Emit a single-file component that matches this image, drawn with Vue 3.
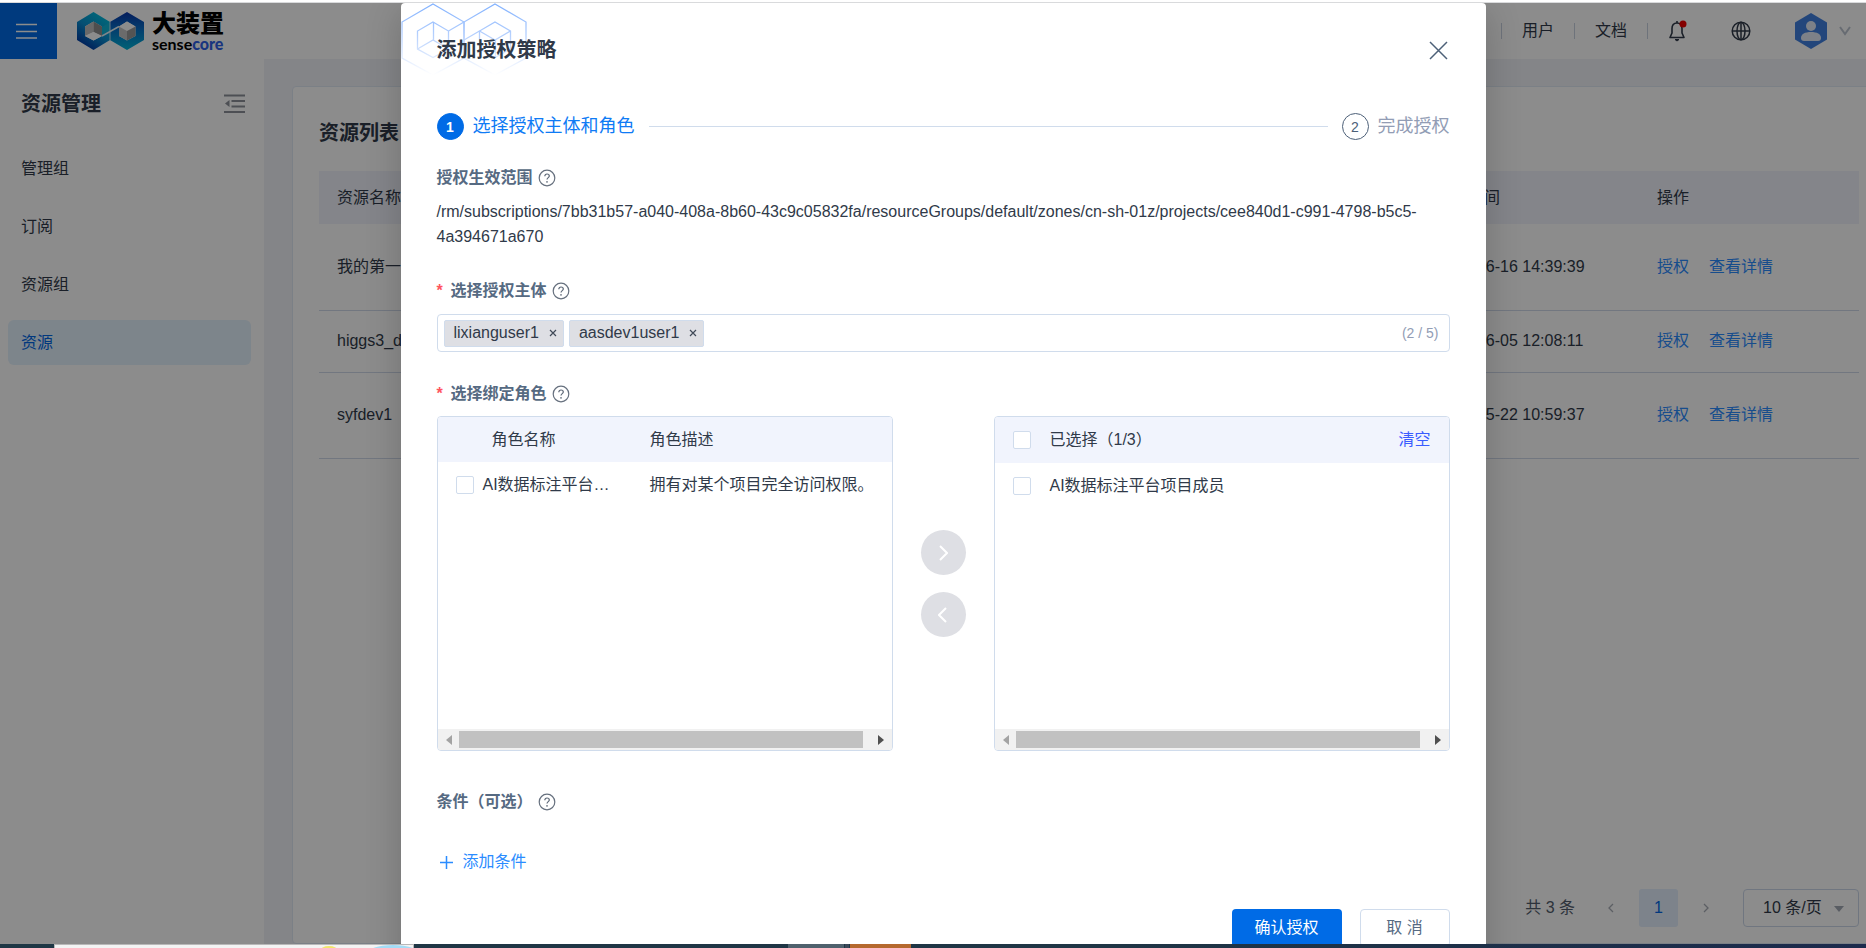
<script setup>
import { ref } from 'vue'

const menu = ['管理组', '订阅', '资源组', '资源']
const active = ref('资源')

const rows = [
  { name: '我的第一', time: '2022-06-16 14:39:39', size: 'tall' },
  { name: 'higgs3_d', time: '2022-06-05 12:08:11', size: 'short' },
  { name: 'syfdev1', time: '2022-05-22 10:59:37', size: 'tall' }
]

const members = ref(['lixianguser1', 'aasdev1user1'])
const removeMember = (name) => {
  members.value = members.value.filter((m) => m !== name)
}
</script>

<template>
  <div class="screen">
    <div class="browser-edge"></div>

    <div class="viewport">
      <div class="app">
        <header class="topbar">
          <button class="burger" type="button" aria-label="菜单">
            <svg width="22" height="16" viewBox="0 0 22 16" stroke="#fff" stroke-width="1.5">
              <path d="M0 1.5h21M0 8.5h21M0 15h21" />
            </svg>
          </button>
          <a class="brand" href="#">
            <svg width="67" height="38" viewBox="0 0 67 38">
              <defs>
                <linearGradient id="ringL" x1="0.8" y1="0" x2="0.2" y2="1">
                  <stop offset="0" stop-color="#00c4e0" />
                  <stop offset="0.5" stop-color="#0a8fd0" />
                  <stop offset="1" stop-color="#002a9c" />
                </linearGradient>
                <linearGradient id="ringR" x1="0.5" y1="0" x2="0.5" y2="1">
                  <stop offset="0" stop-color="#0a35a8" />
                  <stop offset="0.45" stop-color="#0870c8" />
                  <stop offset="1" stop-color="#00b4d8" />
                </linearGradient>
              </defs>
              <path fill="url(#ringL)" fill-rule="evenodd" d="M0 10 16.5 0 33 10V28L16.5 38 0 28ZM8 14.5V24l8.500 4.500L25 24V14.500L16.500 9.500Z" />
              <path fill="url(#ringR)" fill-rule="evenodd" d="M33 10 50 0 67 10V28L50 38 33 28ZM42 14.500V24l8 4.500 8.500-4.500V14.500L50 9.500Z" />
              <path d="M25 15 33 10V18L25 23Z" fill="#10b4d8" />
              <path d="M25 24 42 14.500" stroke="#e8f4fa" stroke-width="1.500" />
              <path d="M33 10V19M33 20V28" stroke="#e8f4fa" stroke-width="0.800" />
              <path d="M8 14.500 16.500 9.500V20L8 24Z" fill="#c0c0c0" />
              <path d="M16.500 9.500 25 14.500V24L16.500 20Z" fill="#8f8f8f" />
              <path d="M8 24 16.500 20 25 24 16.500 28.500Z" fill="#fff" />
              <path d="M42 14.500 50 9.500 58.500 14.500 50 19Z" fill="#fff" />
              <path d="M42 14.500 50 19V28.500L42 24Z" fill="#c4c4c4" />
              <path d="M50 19 58.500 14.500V24L50 28.500Z" fill="#9a9a9a" />
            </svg>
            <span class="brand-text">
              <span class="brand-cn">大装置</span>
              <span class="brand-en">sense<b>core</b></span>
            </span>
          </a>
          <nav class="top-links">
            <a href="#">用户</a>
            <a href="#">文档</a>
          </nav>
          <button class="bell" type="button" aria-label="通知">
            <svg width="20" height="22" viewBox="0 0 20 22" fill="none">
              <path d="M9 3C5.500 3 4 5.500 4 8.500V13l-2 4.500h14L14 13V8.500C14 5.500 12.500 3 9 3Z" stroke="#303a49" stroke-width="1.600" stroke-linejoin="round" />
              <path d="M9 1v2" stroke="#303a49" stroke-width="1.600" />
              <path d="M7 19.500h4l-2 1.500Z" fill="#303a49" stroke="#303a49" />
              <circle cx="15" cy="4" r="3.500" fill="#f00000" />
            </svg>
          </button>
          <button class="globe" type="button" aria-label="语言">
            <svg width="20" height="20" viewBox="0 0 20 20" fill="none" stroke="#303a49" stroke-width="1.500">
              <circle cx="10" cy="10" r="8.800" />
              <ellipse cx="10" cy="10" rx="4" ry="8.800" />
              <path d="M10 1v18M1.500 10h17" />
            </svg>
          </button>
          <button class="account" type="button" aria-label="账户">
            <svg width="32" height="36" viewBox="0 0 32 36">
              <path d="M16 0 32 9.500V26.500L16 36 0 26.500V9.500Z" fill="#4080e0" />
              <circle cx="16" cy="13" r="5" fill="#e4ecf8" />
              <path d="M6 25c0-4 4-6 10-6s10 2 10 6c0 2-1 3-3 3H9c-2 0-3-1-3-3Z" fill="#e4ecf8" />
            </svg>
            <svg width="12" height="10" viewBox="0 0 12 10" fill="none">
              <path d="M1 1 6 8 11 1" stroke="#bcc4d0" stroke-width="2" />
            </svg>
          </button>
        </header>

        <div class="body">
          <aside class="sidebar">
            <div class="side-head">
              <h2>资源管理</h2>
              <button type="button" aria-label="收起">
                <svg width="22" height="20" viewBox="0 0 22 20">
                  <path d="M0 1.500h21M7.500 7h13.500M7.500 12.500h13.500M0 18h21" stroke="#8c919a" stroke-width="2" />
                  <path d="M1 9.500 5.500 6V13Z" fill="#8c919a" />
                </svg>
              </button>
            </div>
            <nav class="menu">
              <a
                v-for="item in menu"
                :key="item"
                href="#"
                :class="{ on: item === active }"
                @click.prevent="active = item"
              >{{ item }}</a>
            </nav>
          </aside>

          <main class="content">
            <section class="card">
              <h1>资源列表</h1>
              <table class="list">
                <thead>
                  <tr>
                    <th class="c-name">资源名称</th>
                    <th class="c-time">创建时间</th>
                    <th class="c-act">操作</th>
                  </tr>
                </thead>
                <tbody>
                  <tr v-for="row in rows" :key="row.name" :class="row.size">
                    <td>{{ row.name }}</td>
                    <td>{{ row.time }}</td>
                    <td>
                      <div class="acts">
                        <a href="#">授权</a>
                        <a href="#">查看详情</a>
                      </div>
                    </td>
                  </tr>
                </tbody>
              </table>
              <div class="pager">
                <span class="total">共 3 条</span>
                <button type="button" class="arrow" aria-label="上一页">
                  <svg width="6" height="10" viewBox="0 0 6 10" fill="none" stroke="#a8adb6" stroke-width="1.300"><path d="M5 1 1 5 5 9" /></svg>
                </button>
                <button type="button" class="page">1</button>
                <button type="button" class="arrow" aria-label="下一页">
                  <svg width="6" height="10" viewBox="0 0 6 10" fill="none" stroke="#a8adb6" stroke-width="1.300"><path d="M1 1 5 5 1 9" /></svg>
                </button>
                <div class="size-box">
                  <select aria-label="每页条数">
                    <option>10 条/页</option>
                  </select>
                  <svg width="10" height="7" viewBox="0 0 10 7"><path d="M0 1h10L5 7Z" fill="#a3a9b5" /></svg>
                </div>
              </div>
            </section>
          </main>
        </div>

        <div class="mask">
          <div class="dialog" role="dialog" aria-labelledby="dlg-title">
            <svg class="hexes" width="126" height="74" viewBox="0 0 126 74" fill="none">
              <defs>
                <linearGradient id="fade" gradientUnits="userSpaceOnUse" x1="0" y1="0" x2="0" y2="72">
                  <stop offset="0" stop-color="#7fb0ff" />
                  <stop offset="0.5" stop-color="#bcd4fd" />
                  <stop offset="1" stop-color="#ffffff" />
                </linearGradient>
              </defs>
              <g stroke="url(#fade)" stroke-width="1.300">
                <path d="M32 1 63 19V55L32 72 1 55V19Z" />
                <path d="M94 1 125 19V55L94 72 63 55V19Z" />
                <path d="M32 19 47.500 28V46L32 54.500 16.500 46V28Z" />
                <path d="M32.500 19V37M16.500 46 32 37 47.500 46M47.500 28 63 19" />
                <path d="M94 19 109.500 28V46L94 54.500 78.500 46V28Z" />
                <path d="M78.500 28 94 37 109.500 28M94.500 37V54M78.500 28 63 37" />
              </g>
            </svg>
            <div class="dlg-head">
              <h2 id="dlg-title">添加授权策略</h2>
              <button type="button" aria-label="关闭">
                <svg width="19" height="19" viewBox="0 0 19 19" stroke="#4d6078" stroke-width="1.500">
                  <path d="M1 1 18 18M18 1 1 18" />
                </svg>
              </button>
            </div>

            <ol class="steps">
              <li class="current"><span class="num">1</span><span>选择授权主体和角色</span></li>
              <li class="rail" aria-hidden="true"></li>
              <li class="next"><span class="num">2</span><span>完成授权</span></li>
            </ol>

            <div class="label scope-label">
              <span>授权生效范围</span>
              <svg class="help" viewBox="0 0 18 18"><use href="#help-glyph" /></svg>
            </div>
            <p class="scope">/rm/subscriptions/7bb31b57-a040-408a-8b60-43c9c05832fa/resourceGroups/default/zones/cn-sh-01z/projects/cee840d1-c991-4798-b5c5-4a394671a670</p>

            <div class="label">
              <i>*</i><label for="principal">选择授权主体</label>
              <svg class="help" viewBox="0 0 18 18"><use href="#help-glyph" /></svg>
            </div>
            <div class="tag-box">
              <span v-for="m in members" :key="m" class="tag">
                {{ m }}
                <button type="button" :aria-label="'移除 ' + m" @click="removeMember(m)">
                  <svg width="8" height="8" viewBox="0 0 8 8" stroke="#404a58" stroke-width="1.200"><path d="M1 1 7 7M7 1 1 7" /></svg>
                </button>
              </span>
              <input id="principal" type="text" />
              <span class="count">({{ members.length }} / 5)</span>
            </div>

            <div class="label">
              <i>*</i><span>选择绑定角色</span>
              <svg class="help" viewBox="0 0 18 18"><use href="#help-glyph" /></svg>
            </div>
            <div class="transfer">
              <div class="panel">
                <table class="roles">
                  <thead>
                    <tr><th class="c-check"></th><th class="c-role"><span class="inset">角色名称</span></th><th>角色描述</th></tr>
                  </thead>
                  <tbody>
                    <tr>
                      <td class="c-check"><input id="role-a" type="checkbox" /></td>
                      <td class="c-role"><label for="role-a">AI数据标注平台…</label></td>
                      <td>拥有对某个项目完全访问权限。</td>
                    </tr>
                  </tbody>
                </table>
                <div class="hscroll" aria-hidden="true">
                  <svg width="6" height="10" viewBox="0 0 6 10"><path d="M6 0V10L0 5Z" fill="#a3a3a3" /></svg>
                  <div class="thumb"></div>
                  <svg width="6" height="10" viewBox="0 0 6 10"><path d="M0 0V10L6 5Z" fill="#505050" /></svg>
                </div>
              </div>

              <div class="movers">
                <button type="button" aria-label="添加">
                  <svg width="10" height="16" viewBox="0 0 10 16" fill="none" stroke="#fff" stroke-width="2"><path d="M2 1 9 8 2 15" /></svg>
                </button>
                <button type="button" aria-label="移除">
                  <svg width="10" height="16" viewBox="0 0 10 16" fill="none" stroke="#fff" stroke-width="2"><path d="M8 1 1 8 8 15" /></svg>
                </button>
              </div>

              <div class="panel">
                <div class="picked head">
                  <input id="pick-all" type="checkbox" />
                  <label for="pick-all">已选择（1/3）</label>
                  <button type="button">清空</button>
                </div>
                <div class="picked">
                  <input id="pick-a" type="checkbox" />
                  <label for="pick-a">AI数据标注平台项目成员</label>
                </div>
                <div class="hscroll" aria-hidden="true">
                  <svg width="6" height="10" viewBox="0 0 6 10"><path d="M6 0V10L0 5Z" fill="#a3a3a3" /></svg>
                  <div class="thumb"></div>
                  <svg width="6" height="10" viewBox="0 0 6 10"><path d="M0 0V10L6 5Z" fill="#505050" /></svg>
                </div>
              </div>
            </div>

            <div class="label cond-label">
              <span>条件（可选）</span>
              <svg class="help" viewBox="0 0 18 18"><use href="#help-glyph" /></svg>
            </div>
            <button class="add" type="button">
              <svg width="13" height="13" viewBox="0 0 13 13" stroke="#2b8cff" stroke-width="1.500"><path d="M6.500 0V13M0 6.500H13" /></svg>
              添加条件
            </button>

            <div class="foot">
              <button class="ok" type="button">确认授权</button>
              <button class="cancel" type="button">取 消</button>
            </div>
          </div>
        </div>
      </div>
    </div>

    <div class="taskbar">
      <div class="preview">
        <svg width="94" height="4" viewBox="0 0 94 4">
          <ellipse cx="10" cy="6" rx="9" ry="5" fill="#f2e66a" />
          <ellipse cx="74" cy="10" rx="28" ry="10" fill="#a3dcf6" />
        </svg>
      </div>
      <div class="task grey"></div>
      <div class="task slate"></div>
      <div class="task orange"></div>
    </div>

    <svg class="defs" width="0" height="0" aria-hidden="true">
      <symbol id="help-glyph" viewBox="0 0 18 18">
        <circle cx="9" cy="9" r="7.800" fill="none" stroke="#66707e" stroke-width="1.200" />
        <path d="M6.800 7.200C6.800 5.800 7.700 5 9 5s2.300.8 2.300 2c0 1.600-2.300 1.700-2.300 3.600" fill="none" stroke="#5b6675" stroke-width="1.200" />
        <circle cx="9" cy="12.900" r="0.800" fill="#5b6675" />
      </symbol>
    </svg>
  </div>
</template>

<style>
body {
  margin: 0;
  overflow: hidden;
}
</style>

<style scoped>
* {
  box-sizing: border-box;
}
.screen {
  display: flex;
  flex-direction: column;
  height: 100vh;
  font: 16px/24px "Liberation Sans", "Noto Sans CJK SC", sans-serif;
  color: #303a49;
  background: #fff;
}
button {
  padding: 0;
  border: 0;
  background: none;
  font: inherit;
  color: inherit;
  cursor: pointer;
}
a {
  color: inherit;
  text-decoration: none;
}
h1, h2, p, ol {
  margin: 0;
  padding: 0;
}
h1, h2 {
  font-size: 20px;
  line-height: 28px;
  font-weight: 700;
}
svg {
  display: block;
  flex: none;
}
.defs {
  position: absolute;
}
.browser-edge {
  flex: none;
  height: 3px;
  border-bottom: 1px solid #d9dadc;
}
.viewport {
  position: relative;
  flex: 1;
  min-height: 0;
  overflow: hidden;
}
/* The page is slightly wider than the window and runs off its right edge. */
.app {
  position: relative;
  display: flex;
  flex-direction: column;
  width: calc(100% + 20px);
  height: 100%;
  overflow: hidden;
}

/* top bar */
.topbar {
  display: flex;
  align-items: center;
  flex: none;
  height: 56px;
  padding-right: 35px;
  background: #fff;
}
.burger {
  display: grid;
  align-items: center;
  justify-items: start;
  width: 57px;
  height: 56px;
  padding-left: 16px;
  background: #006be6;
}
.brand {
  display: flex;
  align-items: center;
  gap: 8px;
  margin-left: 20px;
}
.brand-text {
  display: flex;
  flex-direction: column;
  padding-top: 2px;
  color: #000;
}
.brand-cn {
  font-size: 24px;
  line-height: 24px;
  font-weight: 900;
}
.brand-en {
  font: 700 16px/16px Lato, sans-serif;
}
.brand-en b {
  color: #2f62e8;
}
.top-links {
  display: flex;
  align-items: center;
  margin-left: auto;
}
.top-links a {
  padding: 0 20px;
  line-height: 16px;
  border-left: 1px solid #c8d2e0;
}
.top-links a:last-child {
  border-right: 1px solid #c8d2e0;
}
.bell {
  margin-left: 20px;
}
.globe {
  margin-left: 43px;
}
.account {
  display: flex;
  align-items: center;
  gap: 12px;
  margin-left: 44px;
}

/* page body */
.body {
  display: flex;
  flex: 1;
  min-height: 0;
  background: #f0f3f8;
}
.sidebar {
  flex: none;
  width: 264px;
  background: #fff;
}
.side-head {
  display: flex;
  align-items: center;
  justify-content: space-between;
  padding: 31px 18px 28px 21px;
}
.menu {
  display: flex;
  flex-direction: column;
  gap: 13px;
  padding: 0 13px 0 8px;
}
.menu a {
  padding: 0 13px;
  line-height: 45px;
  border-radius: 6px;
}
.menu .on {
  background: #e4f2fd;
  color: #0067e6;
}
.content {
  display: flex;
  flex: 1;
  min-width: 0;
  padding: 27px 0 0 28px;
}
.card {
  display: flex;
  flex-direction: column;
  flex: 1;
  min-width: 0;
  padding: 32px 26px 16px;
  border: 1px solid #e0e9f5;
  border-radius: 4px;
  background: #fff;
}
.list {
  width: 100%;
  margin-top: 24px;
  border-collapse: collapse;
  table-layout: fixed;
}
.list th {
  height: 53px;
  padding: 0 0 0 18px;
  background: #f0f3fc;
  font-weight: 400;
  text-align: left;
}
.c-time {
  width: 221px;
}
.c-act {
  width: 220px;
}
.list td {
  padding: 0 0 0 18px;
  border-bottom: 1px solid #cfd9ea;
}
.tall td {
  height: 86px;
}
.short td {
  height: 62px;
}
.acts {
  display: flex;
  gap: 20px;
  color: #2b8cff;
}
.pager {
  display: flex;
  align-items: center;
  justify-content: flex-end;
  height: 38px;
  margin-top: auto;
  color: #525d6d;
}
.arrow {
  display: grid;
  place-items: center;
  width: 56px;
  height: 38px;
}
.total {
  margin-right: 8px;
}
.page {
  width: 39px;
  height: 38px;
  border-radius: 3px;
  background: #e3eefe;
  color: #0067e6;
}
.size-box {
  position: relative;
  margin-left: 9px;
}
.size-box select {
  width: 116px;
  height: 38px;
  padding: 0 0 0 19px;
  border: 1px solid #cdd8ea;
  border-radius: 4px;
  appearance: none;
  background: #fff;
  color: #303a49;
  font: inherit;
}
.size-box svg {
  position: absolute;
  top: 16px;
  right: 15px;
}

/* dialog */
.mask {
  position: absolute;
  inset: 0;
  display: flex;
  justify-content: center;
  align-items: flex-start;
  overflow: hidden;
  background: rgba(0, 0, 0, 0.45);
}
.dialog {
  position: relative;
  width: 1085px;
  max-width: 96%;
  padding: 0 36px 36px;
  border-radius: 4px;
  background: #fff;
  box-shadow: 0 8px 36px rgba(0, 0, 0, 0.2);
}
.hexes {
  position: absolute;
  top: 0;
  left: 0;
}
.dlg-head {
  position: relative;
  display: flex;
  align-items: center;
  justify-content: space-between;
  height: 94px;
  padding-right: 2px;
}
.steps {
  display: flex;
  align-items: center;
  margin-top: 16px;
  list-style: none;
  font-size: 18px;
  line-height: 27px;
}
.steps li {
  display: flex;
  align-items: center;
  gap: 9px;
}
.steps .rail {
  flex: 1;
  height: 1px;
  margin: 0 14px;
  background: #d0dcec;
}
.num {
  display: grid;
  place-items: center;
  width: 27px;
  height: 27px;
  border: 1px solid #4d6078;
  border-radius: 50%;
  color: #4d6078;
  font-size: 14px;
}
.current {
  color: #0f7bf5;
}
.current .num {
  border-color: #006be6;
  background: #006be6;
  color: #fff;
  font-weight: 700;
}
.next {
  color: #929db5;
}
.label {
  display: flex;
  align-items: center;
  margin-top: 30px;
  color: #566a82;
  font-weight: 700;
}
.label i {
  width: 14px;
  color: #ff5460;
  font-style: normal;
}
.help {
  width: 18px;
  height: 18px;
  margin-left: 5px;
}
.scope-label {
  margin-top: 26px;
}
.scope {
  margin-top: 9px;
  line-height: 25px;
}
.tag-box {
  display: flex;
  align-items: center;
  gap: 5px;
  height: 38px;
  margin-top: 11px;
  padding: 0 10px 0 6px;
  border: 1px solid #d0dcec;
  border-radius: 4px;
}
.tag {
  display: flex;
  align-items: center;
  gap: 10px;
  height: 27px;
  padding: 0 6px 0 9px;
  border: 1px solid #d0dcec;
  border-radius: 2px;
  background: #dedfe4;
}
.tag-box input {
  flex: 1;
  min-width: 0;
  border: 0;
  outline: 0;
  background: none;
  font: inherit;
}
.count {
  color: #929db5;
  font-size: 14px;
}
.transfer {
  display: flex;
  align-items: stretch;
  height: 335px;
  margin-top: 10px;
}
.panel {
  display: flex;
  flex-direction: column;
  flex: 1;
  min-width: 0;
  overflow: hidden;
  border: 1px solid #d0dcec;
  border-radius: 4px;
}
.movers {
  display: flex;
  flex-direction: column;
  align-items: center;
  justify-content: center;
  gap: 17px;
  width: 101px;
}
.movers button {
  display: grid;
  place-items: center;
  width: 45px;
  height: 45px;
  border-radius: 50%;
  background: #dedfe4;
}
.roles {
  width: 100%;
  border-collapse: collapse;
  table-layout: fixed;
  text-align: left;
}
.roles th {
  height: 45px;
  padding: 0;
  background: #f1f4fd;
  font-weight: 400;
}
.roles td {
  height: 45px;
  padding: 0;
}
.roles .c-check {
  width: 45px;
  padding-left: 18px;
}
.c-role {
  width: 167px;
}
.inset {
  margin-left: 9px;
}
input[type='checkbox'] {
  display: block;
  flex: none;
  width: 18px;
  height: 18px;
  margin: 0;
  border: 1px solid #d0dcec;
  border-radius: 2px;
  appearance: none;
  background: #fff;
}
.picked {
  display: flex;
  align-items: center;
  gap: 19px;
  height: 46px;
  padding: 0 18px;
}
.picked.head {
  background: #f1f4fd;
}
.picked button {
  margin-left: auto;
  color: #3a5cff;
}
.hscroll {
  display: flex;
  align-items: center;
  justify-content: space-between;
  height: 21px;
  margin-top: auto;
  padding: 0 8px;
  background: #f1f1f1;
}
.thumb {
  flex: 1;
  height: 17px;
  margin: 0 15px 0 7px;
  background: #c1c1c1;
}
.cond-label {
  margin-top: 39px;
}
.add {
  display: flex;
  align-items: center;
  gap: 10px;
  margin-top: 36px;
  padding-left: 3px;
  color: #2b8cff;
}
.foot {
  display: flex;
  justify-content: flex-end;
  gap: 18px;
  margin-top: 35px;
}
.foot button {
  height: 38px;
  border-radius: 4px;
}
.ok {
  width: 110px;
  background: #006be6;
  color: #fff;
}
.cancel {
  width: 90px;
  border: 1px solid #d0dcec;
  color: #566a82;
}

/* sliver of the desktop taskbar */
.taskbar {
  display: flex;
  flex: none;
  height: 4px;
  padding-left: 54px;
  background: linear-gradient(90deg, #1f3745 0%, #1f3545 60%, #1c2a4c 100%);
  overflow: hidden;
}
.preview {
  display: flex;
  justify-content: flex-end;
  width: 360px;
  border: 1px solid #b8b8b8;
  border-bottom: 0;
  background: #f3f3f3;
}
.task {
  height: 4px;
}
.grey {
  width: 56px;
  margin-left: 374px;
  background: #4f616d;
}
.slate {
  width: 4px;
  margin-left: 1px;
  background: #3b4858;
}
.orange {
  width: 61px;
  margin-left: 1px;
  background: #b5692e;
}
</style>
